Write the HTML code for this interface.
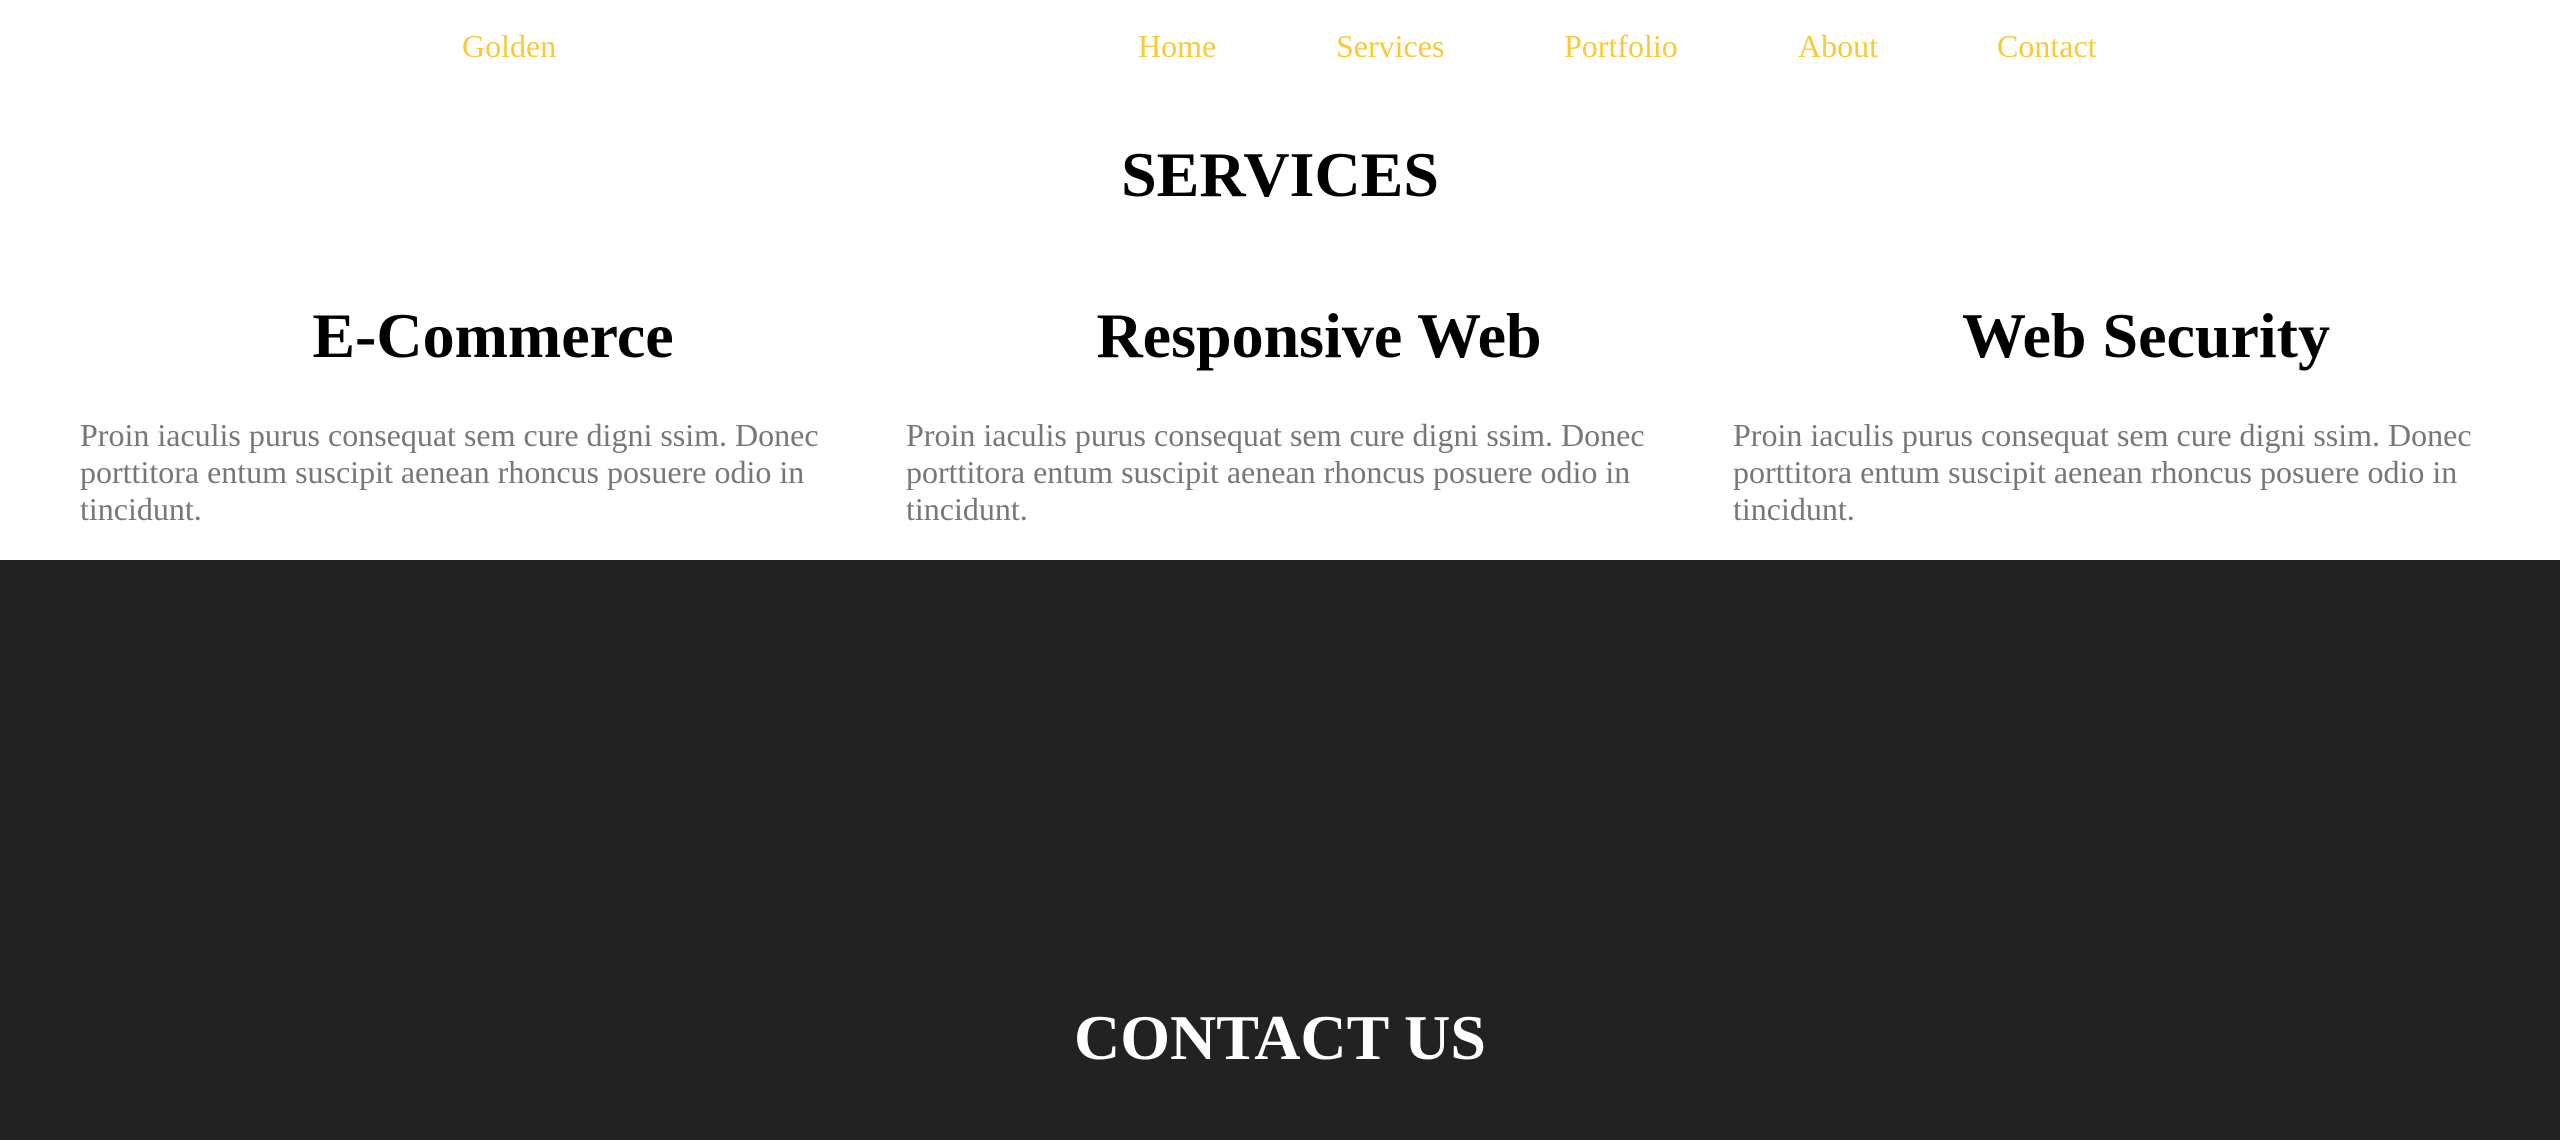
<!DOCTYPE html>
<html><head><style>
html,body{margin:0;padding:0;}
body{width:2560px;height:1140px;overflow:hidden;background:#fff;font-family:"Liberation Serif",serif;position:relative;}
.nav a{position:absolute;top:26px;font-size:32px;color:#f9c937;text-decoration:none;line-height:40px;}
h2{position:absolute;left:0;width:2560px;text-align:center;margin:0;font-size:64px;font-weight:bold;line-height:80px;}
.col{position:absolute;top:296px;width:826px;}
.col h3{margin:0;text-align:center;font-size:64px;line-height:80px;font-weight:bold;}
.col p{margin:0;margin-top:41px;font-size:32px;line-height:37px;color:#777;}
.dark{position:absolute;left:0;top:560px;width:2560px;height:580px;background:#222;}
</style></head><body>
<div class="nav">
<a style="left:462px">Golden</a>
<a style="left:1138px">Home</a>
<a style="left:1336px">Services</a>
<a style="left:1564px">Portfolio</a>
<a style="left:1798px">About</a>
<a style="left:1997px">Contact</a>
</div>
<h2 style="top:135px;color:#000">SERVICES</h2>
<div class="col" style="left:80px"><h3>E-Commerce</h3><p>Proin iaculis purus consequat sem cure digni ssim. Donec porttitora entum suscipit aenean rhoncus posuere odio in tincidunt.</p></div>
<div class="col" style="left:906px"><h3>Responsive Web</h3><p>Proin iaculis purus consequat sem cure digni ssim. Donec porttitora entum suscipit aenean rhoncus posuere odio in tincidunt.</p></div>
<div class="col" style="left:1733px"><h3>Web Security</h3><p>Proin iaculis purus consequat sem cure digni ssim. Donec porttitora entum suscipit aenean rhoncus posuere odio in tincidunt.</p></div>
<div class="dark"></div>
<h2 style="top:998px;color:#fff">CONTACT US</h2>
</body></html>
